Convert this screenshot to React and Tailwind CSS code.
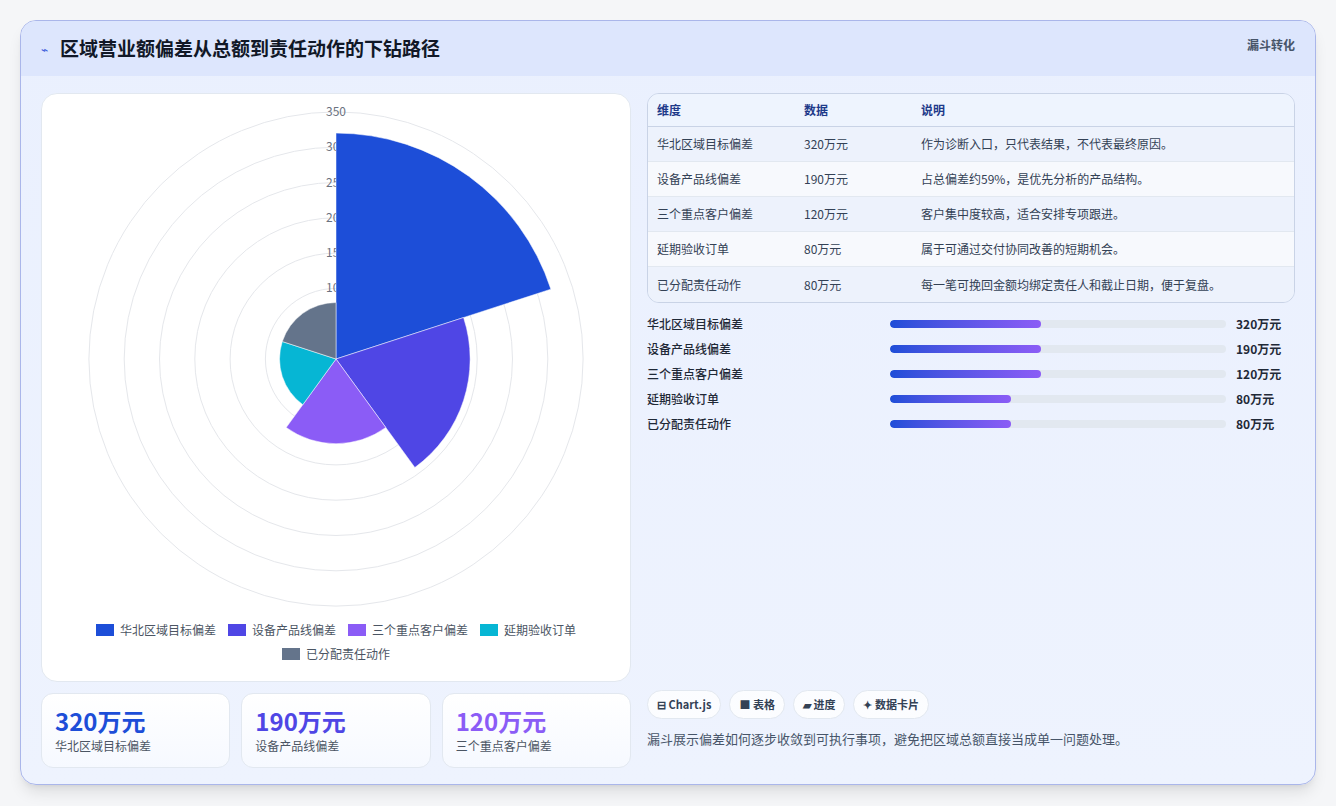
const F = { fontFamily: '"Noto Sans CJK SC", "Noto Sans", sans-serif' };
const data = [
  { n: '华北区域目标偏差', v: 320, c: '#1d4ed8', d: '作为诊断入口，只代表结果，不代表最终原因。', w: 45 },
  { n: '设备产品线偏差', v: 190, c: '#4f46e5', d: '占总偏差约59%，是优先分析的产品结构。', w: 45 },
  { n: '三个重点客户偏差', v: 120, c: '#8b5cf6', d: '客户集中度较高，适合安排专项跟进。', w: 45 },
  { n: '延期验收订单', v: 80, c: '#06b6d4', d: '属于可通过交付协同改善的短期机会。', w: 36 },
  { n: '已分配责任动作', v: 80, c: '#64748b', d: '每一笔可挽回金额均绑定责任人和截止日期，便于复盘。', w: 36 },
];
function Polar() {
  const cx = 294, cy = 265, k = 0.706;
  const segs = data.map((s, i) => {
    const r = s.v * k;
    const a0 = (-90 + i * 72) * Math.PI / 180, a1 = (-90 + (i + 1) * 72) * Math.PI / 180;
    const x0 = cx + r * Math.cos(a0), y0 = cy + r * Math.sin(a0);
    const x1 = cx + r * Math.cos(a1), y1 = cy + r * Math.sin(a1);
    return <path key={i} d={`M${cx},${cy} L${x0},${y0} A${r},${r} 0 0 1 ${x1},${y1} Z`} fill={s.c} stroke="#fff" strokeWidth="0.5" />;
  });
  return (
    <svg width="588" height="520" style={F}>
      {[50,100,150,200,250,300,350].map(v => <circle key={v} cx={cx} cy={cy} r={v*k} fill="none" stroke="#e5e7eb" strokeWidth="1" />)}
      {[100,150,200,250,300,350].map(v => <text key={v} x={cx} y={cy - v*k + 4} textAnchor="middle" fontSize="12" fill="#6b7280">{v}</text>)}
      {segs}
    </svg>
  );
}
export default function App() {
  return (
    <div className="w-[1336px] h-[806px] bg-[#f5f6f8] p-5 pb-0" style={F}>
      <div className="h-[765px] rounded-2xl border border-[#aab6ea] bg-gradient-to-b from-[#eaf0fe] to-[#eef3fe] shadow-lg overflow-hidden flex flex-col">
        <div className="h-[55px] bg-[#dde6fd] flex items-center justify-between px-5 shrink-0">
          <div className="flex items-center gap-3">
            <span className="text-[#3b5bdb] text-xs">⌁</span>
            <span className="text-[19px] font-bold text-[#111827]">区域营业额偏差从总额到责任动作的下钻路径</span>
          </div>
          <span className="text-xs font-bold text-[#475569] self-start mt-4">漏斗转化</span>
        </div>
        <div className="flex gap-4 px-5 pt-[17px]">
          <div className="w-[590px] flex flex-col gap-[11px]">
            <div className="h-[589px] bg-white rounded-2xl border border-[#e2e8f0] flex flex-col items-center">
              <Polar />
              <div className="flex flex-wrap justify-center gap-x-3 gap-y-1 w-[520px] mt-[6px] text-xs text-[#4b5563]">
                {data.map(s => <div key={s.n} className="flex items-center gap-[6px] leading-[20px]"><span className="w-[18px] h-3" style={{background: s.c}} />{s.n}</div>)}
              </div>
            </div>
            <div className="flex gap-[11px]">
              {data.slice(0,3).map(s => (
                <div key={s.n} className="flex-1 h-[75px] rounded-xl border border-[#e2e8f0] bg-gradient-to-b from-white to-[#f6f9ff] px-[13px] pt-3">
                  <div className="text-[24px] font-bold leading-[30px]" style={{color: s.c}}>{s.v}万元</div>
                  <div className="text-xs text-[#4b5563] mt-[2px]">{s.n}</div>
                </div>
              ))}
            </div>
          </div>
          <div className="flex-1 flex flex-col">
            <div className="rounded-xl border border-[#c9d3e6] overflow-hidden text-xs">
              <div className="flex h-[33px] items-center bg-[#eef4fe] font-bold text-[#1e3a8a] border-b border-[#c9d3e6]">
                <div className="w-[156px] pl-[9px]">维度</div><div className="w-[117px]">数据</div><div>说明</div>
              </div>
              {data.map((s, i) => (
                <div key={s.n} className={`flex h-[35px] items-center text-[#334155] ${i % 2 ? 'bg-[#f7f9fd]' : 'bg-[#edf2fc]'} ${i < 4 ? 'border-b border-[#e2e8f0]' : ''}`}>
                  <div className="w-[156px] pl-[9px]">{s.n}</div><div className="w-[117px]">{s.v}万元</div><div>{s.d}</div>
                </div>
              ))}
            </div>
            <div className="mt-[12px] flex flex-col gap-[7px] text-xs font-medium text-[#1f2937]">
              {data.map(s => (
                <div key={s.n} className="flex items-center h-[18px]">
                  <div className="w-[243px]">{s.n}</div>
                  <div className="w-[336px] h-2 rounded-full bg-[#e2e8f0] overflow-hidden">
                    <div className="h-full rounded-full bg-gradient-to-r from-[#1d4ed8] to-[#8b5cf6]" style={{width: s.w + '%'}} />
                  </div>
                  <div className="ml-[10px] font-bold">{s.v}万元</div>
                </div>
              ))}
            </div>
            <div className="mt-auto flex gap-2 text-[11px] font-bold text-[#334155]">
              {['⊟ Chart.js','■ 表格','▰ 进度','✦ 数据卡片'].map(t => <span key={t} className="h-[29px] px-[9px] rounded-full bg-white/80 border border-[#e2e8f0] flex items-center">{t}</span>)}
            </div>
            <div className="mt-[10px] mb-[20px] text-[13px] text-[#475569]">漏斗展示偏差如何逐步收敛到可执行事项，避免把区域总额直接当成单一问题处理。</div>
          </div>
        </div>
      </div>
    </div>
  );
}
